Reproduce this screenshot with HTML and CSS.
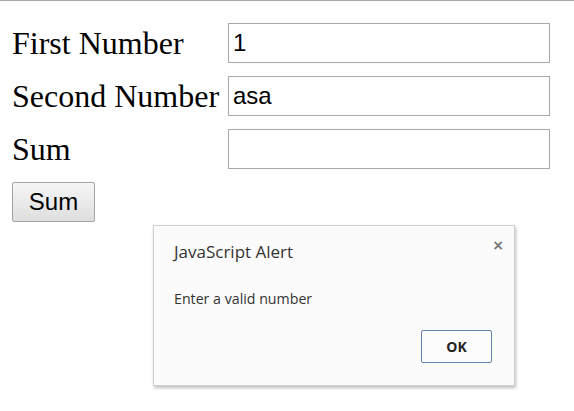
FILE: index.html
```html
<!DOCTYPE html>
<html>
<head>
<meta charset="utf-8">
<link rel="stylesheet" href="styles.css">
</head>
<body>
<div class="topline"></div>
<form class="form">
  <label class="label">First Number</label>
  <input class="field" type="text" value="1">
  <label class="label">Second Number</label>
  <input class="field" type="text" value="asa">
  <label class="label">Sum</label>
  <input class="field" type="text" value="">
  <button class="btn" type="button">Sum</button>
</form>
<div class="dialog">
  <div class="dialog-head">
    <span class="dialog-title">JavaScript Alert</span>
    <span class="dialog-close">×</span>
  </div>
  <div class="dialog-msg">Enter a valid number</div>
  <div class="dialog-foot">
    <button class="ok" type="button">OK</button>
  </div>
</div>
</body>
</html>
```
FILE: styles.css
```css
html, body {
  margin: 0;
  padding: 0;
  background: #ffffff;
}
body {
  width: 574px;
  height: 411px;
  position: relative;
  overflow: hidden;
}
.topline {
  height: 1px;
  background: #a8a8a8;
}
.form {
  display: grid;
  grid-template-columns: 216px 322px;
  row-gap: 13px;
  margin: 22px 0 0 12px;
  align-items: center;
}
.label {
  font-family: "Liberation Serif", "Times New Roman", serif;
  font-size: 32px;
  color: #000;
  white-space: nowrap;
}
.field {
  box-sizing: border-box;
  width: 322px;
  height: 40px;
  margin: 0;
  border: 1px solid #a9a9a9;
  padding: 0 4px;
  font-family: "Liberation Sans", Arial, sans-serif;
  font-size: 24px;
  color: #000;
  background: #fff;
  outline: none;
}
.btn {
  grid-column: 1 / 2;
  justify-self: start;
  box-sizing: border-box;
  width: 83px;
  height: 40px;
  margin: 0;
  padding: 0 0 1px 0;
  border: 1px solid #a3a3a3;
  border-radius: 2px;
  background: linear-gradient(#f6f6f6, #dedede);
  font-family: "Liberation Sans", Arial, sans-serif;
  font-size: 24px;
  color: #000;
}
.dialog {
  position: absolute;
  left: 153px;
  top: 225px;
  width: 362px;
  height: 161px;
  box-sizing: border-box;
  background: #fbfbfb;
  border: 1px solid #cfcfcf;
  box-shadow: 1px 2px 3px rgba(0,0,0,0.25);
  font-family: "Open Sans", "Noto Sans", sans-serif;
  color: #333;
  display: flex;
  flex-direction: column;
}
.dialog-head {
  display: flex;
  justify-content: space-between;
  align-items: flex-start;
  padding: 14px 10px 0 20px;
  height: 30px;
}
.dialog-title {
  font-size: 17px;
  color: #333;
  line-height: 24px;
}
.dialog-close {
  font-family: "DejaVu Sans", sans-serif;
  font-size: 14px;
  font-weight: bold;
  color: #777;
  line-height: 14px;
  margin-top: -2px;
}
.dialog-msg {
  padding: 20px 20px 0 20px;
  font-size: 14.2px;
  color: #333;
  line-height: 18px;
}
.dialog-foot {
  display: flex;
  justify-content: flex-end;
  padding: 22px 22px 0 0;
}
.ok {
  box-sizing: border-box;
  width: 71px;
  height: 33px;
  margin: 0;
  border: 1px solid #6382ad;
  border-radius: 2px;
  background: #fcfcfc;
  font-family: "Open Sans", "Noto Sans", sans-serif;
  font-size: 14px;
  font-weight: bold;
  color: #222;
}
```
